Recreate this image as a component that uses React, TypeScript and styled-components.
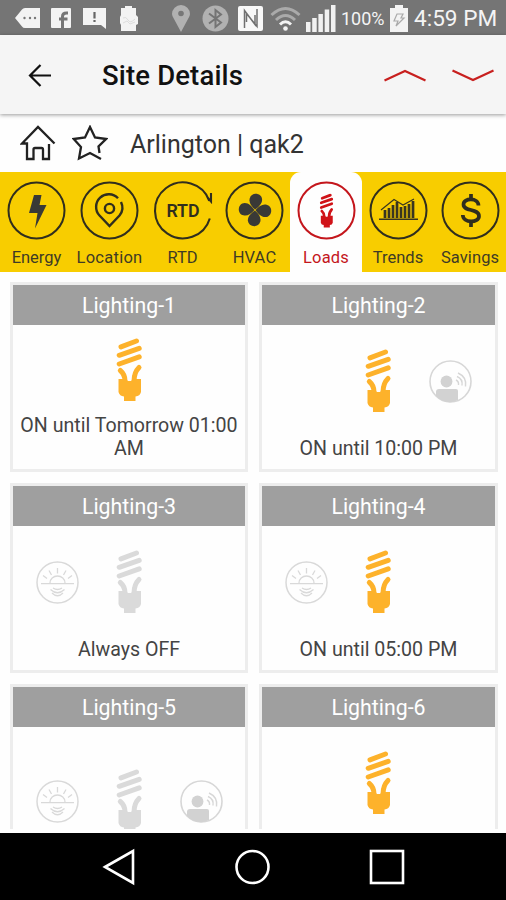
import React from "react";
import styled, { createGlobalStyle, css } from "styled-components";

const GlobalStyle = createGlobalStyle`
  * { box-sizing: border-box; }
  body { margin: 0; background: #fff; font-family: Roboto, "Liberation Sans", sans-serif; }
  svg { display: block; flex: none; }
`;

const Screen = styled.main`
  width: 506px;
  height: 900px;
  display: flex;
  flex-direction: column;
  overflow: hidden;
  background: #fefefe;
`;

const StatusBar = styled.div`
  height: 35px;
  flex: none;
  display: flex;
  align-items: center;
  padding-top: 1px;
  background: #757575;
  color: #f4f4f4;
  white-space: nowrap;
`;

const StatusItem = styled.span<{ $gap: number; $w: number; $size: number }>`
  flex: none;
  margin-left: ${(p) => p.$gap}px;
  width: ${(p) => p.$w}px;
  font-size: ${(p) => p.$size}px;
  line-height: 32px;
  padding-top: 2px;
`;

const AppBar = styled.header`
  height: 79px;
  flex: none;
  display: flex;
  align-items: center;
  background: #f5f5f5;
  padding: 2px 11px 0 28px;
  box-shadow: 0 1px 4px rgba(0, 0, 0, 0.4);
  z-index: 1;
`;

const Title = styled.h1`
  flex: 1;
  margin: 0 0 0 50px;
  font-size: 27.5px;
  letter-spacing: 0.15px;
  font-weight: 500;
  line-height: 34px;
  padding-top: 1px;
  color: #111;
`;

const Chevrons = styled.div`
  display: flex;
  gap: 24px;
`;

const SiteRow = styled.section`
  height: 58px;
  flex: none;
  display: flex;
  align-items: center;
  padding-left: 20px;
`;

const SiteName = styled.span`
  margin-left: 22px;
  font-size: 25px;
  line-height: 34px;
  padding-top: 4px;
  color: #333;
  white-space: nowrap;
`;

const TabBar = styled.nav`
  height: 100px;
  flex: none;
  display: grid;
  grid-template-columns: 73px 73px 73px 71px 72px 72px 72px;
  background: #f8cd00;
`;

const Tab = styled.div<{ $active?: boolean }>`
  display: flex;
  flex-direction: column;
  align-items: center;
  padding-top: 9px;
  color: #3f3b25;
  ${(p) =>
    p.$active &&
    css`
      background: #fefefe;
      border-radius: 11px 11px 0 0;
      color: #c4161c;
    `}
`;

const TabLabel = styled.span<{ $spacing: number }>`
  margin-top: 8px;
  font-size: 16.5px;
  line-height: 20px;
  letter-spacing: ${(p) => p.$spacing}px;
  white-space: nowrap;
`;

const Viewport = styled.div`
  height: 557px;
  flex: none;
  overflow: hidden;
  padding: 10px 8px 0 10px;
`;

const Grid = styled.div`
  display: grid;
  grid-template-columns: 238px 239px;
  grid-auto-rows: 190px;
  gap: 11px;
`;

const Card = styled.article`
  display: flex;
  flex-direction: column;
  border: 3px solid #ededed;
  background: #fefefe;
`;

const CardHeader = styled.h2`
  margin: 0;
  height: 40px;
  flex: none;
  background: #9f9f9f;
  color: #fff;
  text-align: center;
  font-size: 21.3px;
  font-weight: 400;
  line-height: 42px;
`;

const Devices = styled.div<{ $low: boolean }>`
  flex: 1;
  display: grid;
  grid-template-columns: repeat(3, 72px);
  justify-content: center;
  justify-items: center;
  align-items: center;
  padding-top: ${(p) => (p.$low ? 4 : 0)}px;
`;

const Status = styled.p<{ $lines: number }>`
  flex: none;
  margin: 0;
  height: ${(p) => (p.$lines ? p.$lines * 23 + 9 : 0)}px;
  color: #444;
  text-align: center;
  font-size: 19.6px;
  line-height: 23px;
`;

const NavBar = styled.footer`
  height: 67px;
  margin-top: auto;
  flex: none;
  display: flex;
  justify-content: center;
  align-items: center;
  gap: 97px;
  background: #000;
`;

const Slot = styled.span<{ $gap: number }>`
  margin-left: ${(p) => p.$gap}px;
`;

const StatusIcons = () => (
  <>
    <Slot $gap={15}>
      <svg width="25" height="20" viewBox="0 0 25 20" fill="#f3f3f3">
        <path d="M0 10 7 1.5Q8 0 10 0H25V20H10Q8 20 7 18.500Z" />
        <g fill="#777"><circle cx="9.500" cy="10" r="1.200" /><circle cx="15" cy="10" r="1.200" /><circle cx="20" cy="10" r="1.200" /></g>
      </svg>
    </Slot>
    <Slot $gap={11}>
      <svg width="20" height="20" viewBox="0 0 20 20">
        <rect width="20" height="20" rx="1" fill="#f3f3f3" />
        <path d="M11.500 20V8.500Q11.500 5 15.500 5H17M8 11H16.500" fill="none" stroke="#757575" strokeWidth="3" />
      </svg>
    </Slot>
    <Slot $gap={12}>
      <svg width="23" height="21" viewBox="0 0 23 21">
        <path d="M0 0H23V21L18 17H0Z" fill="#f3f3f3" />
        <path d="M11.500 4V10.500M11.500 12V14" stroke="#666" strokeWidth="2.200" />
      </svg>
    </Slot>
    <Slot $gap={14}>
      <svg width="18" height="25" viewBox="0 0 18 25" fill="#f3f3f3">
        <path d="M5 0H12V2H16V9L18 11V18L16 19V25H1V19L0 17V11L1 9V2H5Z" />
        <path d="M3 12Q6 10 8 14T15 13M3 17L7 15L10 18L15 16" fill="none" stroke="#ddd" />
      </svg>
    </Slot>
    <Slot $gap={34}>
      <svg width="18" height="27" viewBox="0 0 18 27">
        <path d="M9 27 2 14Q0 11 0 9A9 9 0 0 1 18 9Q18 11 16 14Z" fill="#b1b1b1" />
        <circle cx="9" cy="8.500" r="2.800" fill="#777" />
      </svg>
    </Slot>
    <Slot $gap={12}>
      <svg width="27" height="27" viewBox="0 0 27 27">
        <circle cx="13.500" cy="13.500" r="13" fill="#b1b1b1" />
        <path d="M7 8.500 19 17.500 13.500 22V5L19 9.500 7 18.500" fill="none" stroke="#747474" strokeWidth="2" />
      </svg>
    </Slot>
    <Slot $gap={9}>
      <svg width="25" height="25" viewBox="0 0 25 25">
        <rect width="25" height="25" rx="2" fill="#f8f8f8" />
        <path d="M6.500 22V4.500L17 18.500V9M19 3V20.500L8.500 7.500V16" fill="none" stroke="#707070" strokeWidth="1.500" />
      </svg>
    </Slot>
    <Slot $gap={7}>
      <svg width="31" height="25" viewBox="0 0 31 25" fill="none" strokeWidth="3">
        <path d="M1.500 9Q15.500-4 29.500 9M6 14Q15.500 5 25 14" stroke="#aaa" />
        <path d="M10 18.500Q15.500 13 21 18.500" stroke="#f4f4f4" />
        <circle cx="15.500" cy="22.500" r="2.300" fill="#f4f4f4" />
      </svg>
    </Slot>
    <Slot $gap={5}>
      <svg width="30" height="27" viewBox="0 0 30 27" fill="#f1f1f1">
        <path d="M0 17H4.500V27H0ZM6.200 13H10.700V27H6.200ZM12.400 9H16.900V27H12.400ZM18.700 4.500H23.200V27H18.700ZM25 0H29.500V27H25Z" />
      </svg>
    </Slot>
    <StatusItem $gap={5} $w={44} $size={18}>100%</StatusItem>
    <Slot $gap={5}>
      <svg width="18" height="27" viewBox="0 0 18 27">
        <path d="M5 0H13V3H18V27H0V3H5Z" fill="#f3f3f3" />
        <path d="M7 9H13L11 13H14L6 21 8 16H4Z" fill="none" stroke="#aaa" strokeWidth="1.200" />
      </svg>
    </Slot>
    <StatusItem $gap={6} $w={84} $size={22.600}>4:59 PM</StatusItem>
  </>
);

const Bulb = ({ color }: { color: string }) => (
  <svg width={27} height={64} viewBox="0 0 27 64">
    <g fill="none" stroke={color} strokeWidth="5" strokeLinecap="round">
      <path d="M5 8.800 20.500 3M3.200 17.300 23.200 10.400M3.200 26 23.200 18.900" />
      <path d="M4.300 32.500Q9 36.500 9 43M23 29.500Q18 34.500 18 43" />
    </g>
    <path d="M2.500 41H9.500L12 43H15L17.500 41H25V54Q24 58 19.500 58.500V63H8V58.500Q3.500 58 2.500 54Z" fill={color} />
  </svg>
);

const SunSensor = () => (
  <svg width="43" height="43" viewBox="0 0 43 43" fill="none" stroke="#d9d9d9" strokeWidth="1.300">
    <circle cx="21.500" cy="21.500" r="20.500" strokeWidth="1.500" />
    <path d="M5 22.700H38M14 22A7.500 7 0 0 1 29 22M7 14.500 11 17.500M13 9.500 15.500 14M21.500 7V12.500M30 9.500 27.500 14M36 14.500 32 17.500" />
    <path d="M17 27Q21.500 30 26 27M14.500 28.500Q21.500 35 28.500 28.500M16 32Q21.500 37.500 27 32" />
  </svg>
);

const MotionSensor = () => (
  <svg width="43" height="43" viewBox="0 0 43 43">
    <circle cx="21.500" cy="21.500" r="20.500" fill="none" stroke="#d7d7d7" strokeWidth="1.600" />
    <circle cx="17.500" cy="21.500" r="5.900" fill="#d2d2d2" />
    <path d="M7 36V32Q7 29 10 29H27Q29 29 29 31V40Q17 46 7 36Z" fill="#d2d2d2" />
    <path d="M27 20Q30 21.500 29.500 25M28 16.500Q34 19 33 25.500M29 13Q38 17 36.500 26.500" fill="none" stroke="#d7d7d7" strokeWidth="1.400" />
  </svg>
);

type TabKind = "energy" | "location" | "rtd" | "hvac" | "loads" | "trends" | "savings";

const glyphs: Record<TabKind, React.ReactNode> = {
  energy: <path d="M27 14H34.500L32.500 24H39.500L28 47.500 30.500 32H22Z" fill="#393936" />,
  location: (
    <g fill="none" stroke="#302e1e" strokeWidth="2.400">
      <path d="M38 17.300A12.600 12.600 0 0 0 19.500 34.500L29.500 45 39.500 34.500A12.600 12.600 0 0 0 41 21" />
      <circle cx="29.500" cy="27.500" r="4.600" />
    </g>
  ),
  rtd: (
    <text x="30" y="35.800" textAnchor="middle" fontFamily="Roboto, sans-serif" fontSize="17.800" fontWeight="600" fill="#302e1e">RTD</text>
  ),
  hvac: (
    <g fill="#393936" transform="translate(.5 -.5) rotate(6 29.500 29.500)">
      {[0, 90, 180, 270].map((angle) => (
        <path key={angle} transform={`rotate(${angle} 29.500 29.500)`} d="M29.500 29C25 26 22.500 22.500 23 18.500C24 11.500 34.500 11.500 35.500 18.500C36 22.500 33 26 29.500 29Z" />
      ))}
    </g>
  ),
  loads: <g transform="translate(22.500 12.500) scale(.53 .54)"><Bulb color="#d01318" /></g>,
  trends: (
    <g fill="none" stroke="#393620">
      <path d="M10 38.300H49" strokeWidth="1.600" />
      <path d="M16 37V29M20 37V27M24 37V24M28 37V21M32 37V26M36 37V25M40 37V23M44 37V20" strokeWidth="2.700" />
      <path d="M12 29 25 18.500 34 24 45 18" strokeWidth="1.200" />
    </g>
  ),
  savings: (
    <g fill="none" stroke="#302e1e" strokeWidth="3.700">
      <path d="M37.500 24.500C37.500 16.500 22.500 16.500 22.500 23.500C22.500 31 38 27 38 35.200C38 42 22 42.500 21.800 34" />
      <path d="M30 13V19M30 40V46" />
    </g>
  ),
};

const TabIcon = ({ kind }: { kind: TabKind }) => (
  <svg width="59" height="59" viewBox="0 0 59 59" overflow="visible">
    {kind === "rtd" ? (
      <path d="M56.800 37.500A28 28 0 1 1 56.300 19.800M55 17 58 20.500V12" fill="none" stroke="#302e1e" strokeWidth="2.100" />
    ) : (
      <circle cx="29.500" cy="29.500" r="28" fill="none" stroke={kind === "loads" ? "#c4161c" : "#302e1e"} strokeWidth="2" />
    )}
    {glyphs[kind]}
  </svg>
);

const tabs: { kind: TabKind; label: string; spacing: number }[] = [
  { kind: "energy", label: "Energy", spacing: 0 },
  { kind: "location", label: "Location", spacing: 0.25 },
  { kind: "rtd", label: "RTD", spacing: 0 },
  { kind: "hvac", label: "HVAC", spacing: 0.1 },
  { kind: "loads", label: "Loads", spacing: 0.2 },
  { kind: "trends", label: "Trends", spacing: 0 },
  { kind: "savings", label: "Savings", spacing: 0.1 },
];

const loads = [
  { name: "Lighting-1", on: true, status: "ON until Tomorrow 01:00 AM", lines: 2 },
  { name: "Lighting-2", on: true, status: "ON until 10:00 PM", lines: 1, motion: true },
  { name: "Lighting-3", on: false, status: "Always OFF", lines: 1, sun: true },
  { name: "Lighting-4", on: true, status: "ON until 05:00 PM", lines: 1, sun: true },
  { name: "Lighting-5", on: false, lines: 0, sun: true, motion: true },
  { name: "Lighting-6", on: true, lines: 1 },
];

export default function App() {
  return (
    <>
      <GlobalStyle />
      <Screen>
        <StatusBar><StatusIcons /></StatusBar>
        <AppBar>
          <svg width="24" height="24" viewBox="0 0 24 24" fill="none" stroke="#111" strokeWidth="2.200">
            <path d="M23 11.500H2M12.500 1 2 11.500 12.500 22" />
          </svg>
          <Title>Site Details</Title>
          <Chevrons>
            <svg width="44" height="14" viewBox="0 0 44 14" fill="none" stroke="#c8201f" strokeWidth="2.200"><path d="M1.500 11.500 22 2 42.500 11.500" /></svg>
            <svg width="44" height="14" viewBox="0 0 44 14" fill="none" stroke="#c8201f" strokeWidth="2.200"><path d="M1.500 1.500 22 11 42.500 1.500" /></svg>
          </Chevrons>
        </AppBar>
        <SiteRow>
          <svg width="36" height="36" viewBox="0 0 36 36" fill="none" stroke="#222" strokeWidth="2.300">
            <path d="M34.500 18.500 18 2 2 18.500H7V34H13.500V24.500Q13.500 23 15 23H21.500Q23 23 23 24.500V34H29V19" />
          </svg>
          <Slot $gap={16}>
            <svg width="36" height="36" viewBox="0 0 36 36" fill="none" stroke="#222" strokeWidth="2.300">
              <path d="M29 34 18 28 7 33.500 9 22 1.800 14 13 12.500 18 2 23 12.500 34 14 26.500 21.500 27.500 28" />
            </svg>
          </Slot>
          <SiteName>Arlington | qak2</SiteName>
        </SiteRow>
        <TabBar>
          {tabs.map((tab) => (
            <Tab key={tab.kind} $active={tab.kind === "loads"}>
              <TabIcon kind={tab.kind} />
              <TabLabel $spacing={tab.spacing}>{tab.label}</TabLabel>
            </Tab>
          ))}
        </TabBar>
        <Viewport>
          <Grid>
            {loads.map((load) => (
              <Card key={load.name}>
                <CardHeader>{load.name}</CardHeader>
                <Devices $low={load.lines === 0}>
                  <span>{load.sun && <SunSensor />}</span>
                  <Bulb color={load.on ? "#fdb22b" : "#dadada"} />
                  <span>{load.motion && <MotionSensor />}</span>
                </Devices>
                <Status $lines={load.lines}>{load.status}</Status>
              </Card>
            ))}
          </Grid>
        </Viewport>
        <NavBar>
          <svg width="36" height="38" viewBox="0 0 36 38" fill="none" stroke="#fff" strokeWidth="2.600"><path d="M5 19 33 3V35Z" /></svg>
          <svg width="38" height="38" viewBox="0 0 38 38" fill="none" stroke="#fff" strokeWidth="2.600"><circle cx="19.500" cy="19" r="16" /></svg>
          <svg width="38" height="38" viewBox="0 0 38 38" fill="none" stroke="#fff" strokeWidth="2.600"><rect x="3" y="3" width="32" height="32" /></svg>
        </NavBar>
      </Screen>
    </>
  );
}
